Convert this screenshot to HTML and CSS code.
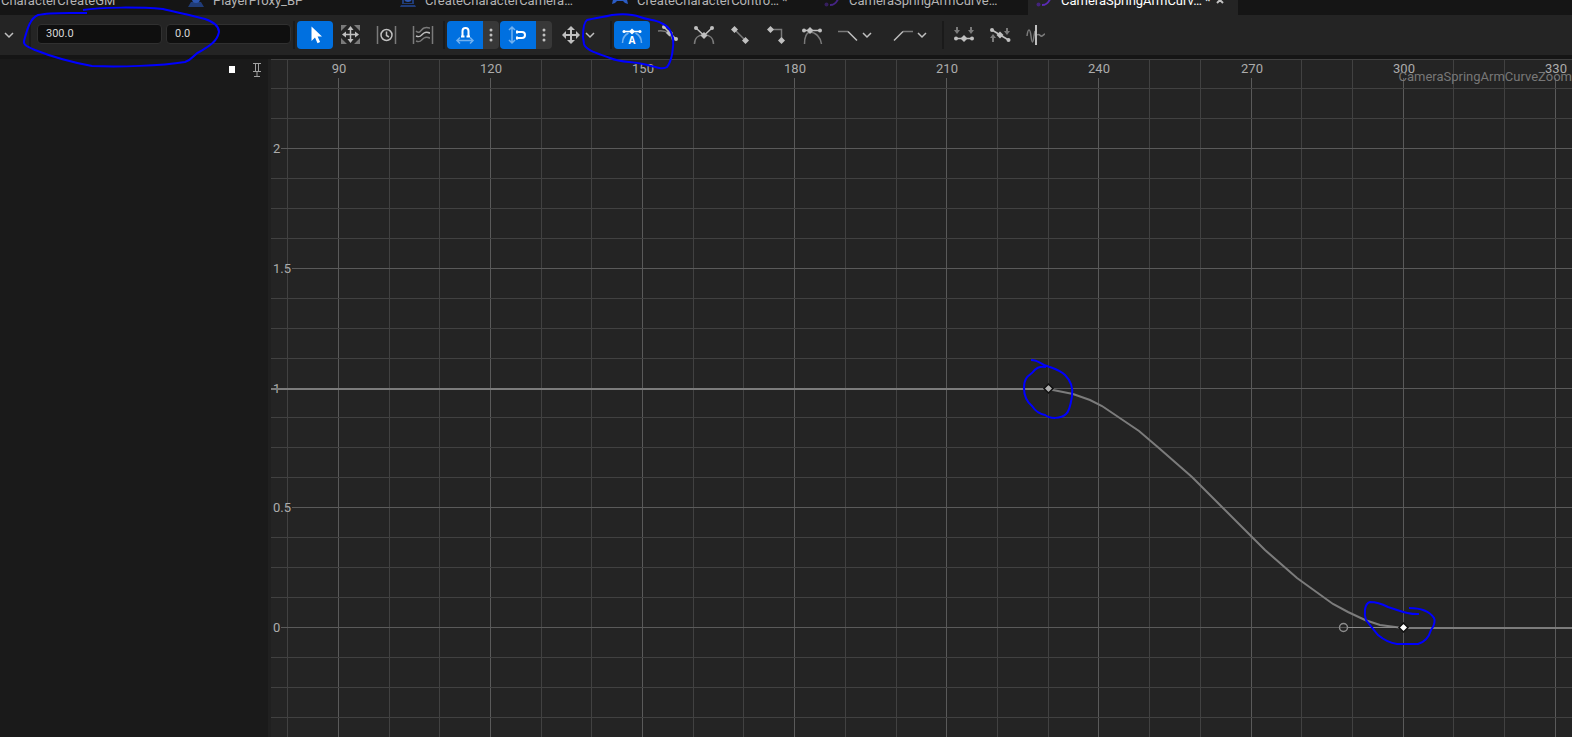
FILE: index.html
```html
<!DOCTYPE html>
<html lang="en">

<head>
  <meta charset="UTF-8">
  <title>Curve editor</title>
  <link rel="stylesheet" href="styles.css">
</head>

<body>
  <nav class="tabs">
    <a class="tab" href="#">
      <svg class="tab-icon person" viewBox="0 0 16 16"><circle cx="8" cy="6" r="4"/><path d="M0 16l3-5h10l3 5z"/></svg>
      <span>CharacterCreateGM</span>
    </a>
    <a class="tab" href="#">
      <svg class="tab-icon person" viewBox="0 0 16 16"><path d="M0 15l3-5h10l3 5z"/><circle class="head" cx="8" cy="7" r="4"/></svg>
      <span>PlayerProxy_BP</span>
    </a>
    <a class="tab" href="#">
      <svg class="tab-icon person" viewBox="0 0 16 16"><path d="M0 15l1-2h14l1 2zM2 12V7h2v4h8V7h2v5z"/><circle class="head" cx="8" cy="6" r="4"/></svg>
      <span>CreateCharacterCamera…</span>
    </a>
    <a class="tab" href="#">
      <svg class="tab-icon pad" viewBox="0 0 16 16"><path d="M2 3h12l2 9-3-1-2-2H5l-2 2-3 1z"/></svg>
      <span>CreateCharacterContro… *</span>
    </a>
    <a class="tab" href="#">
      <svg class="tab-icon curve dim" viewBox="0 0 16 16"><circle cx="2.500" cy="12.500" r="2"/><path d="M6 13c5 0 7-3 9-8"/></svg>
      <span>CameraSpringArmCurve…</span>
    </a>
    <a class="tab active" href="#">
      <svg class="tab-icon curve" viewBox="0 0 16 16"><circle cx="2.500" cy="12.500" r="2"/><path d="M6 13c5 0 7-3 9-8"/></svg>
      <span>CameraSpringArmCurv… *</span>
      <svg class="close" viewBox="0 0 8 8"><path d="M1 1l6 6M7 1L1 7"/></svg>
    </a>
  </nav>

  <header class="toolbar">
    <button class="more" aria-label="More"><svg class="chevron" viewBox="0 0 10 10"><path d="M1 3l4 4 4-4"/></svg></button>
    <div class="fields">
      <input type="text" value="300.0" aria-label="Time">
      <input type="text" value="0.0" aria-label="Value">
    </div>

    <div class="group">
      <button class="tool on" aria-label="Select">
        <svg viewBox="0 0 36 28"><path class="fill" d="M14.500 5.500v14.500l3.500-3.500 2.500 5.700 2.600-1.200-2.500-5.500H25z"/></svg>
      </button>
      <button class="tool" aria-label="Frame">
        <svg viewBox="0 0 36 28">
          <path class="fill grey" d="M8 4h6l-6 6zM27 4v6l-6-6zM8 23v-6l6 6zM27 23h-6l6-6z"/>
          <path d="M17.500 7v13M11 13.500h13"/>
          <path class="fill" d="M17.500 5l3 4h-6zM17.500 22l-3-4h6zM9 13.500l4-3v6zM26 13.500l-4 3v-6z"/>
        </svg>
      </button>
      <button class="tool" aria-label="Frame time">
        <svg viewBox="0 0 36 28">
          <path class="grey" d="M8.500 5v18M26.500 5v18"/>
          <circle cx="17.500" cy="14" r="5.500"/><path d="M17.500 10.500v4l2.500 1.500"/>
        </svg>
      </button>
      <button class="tool" aria-label="Frame values">
        <svg viewBox="0 0 36 28">
          <path class="grey" d="M8.500 5v18M27.500 5v18M11 10c4 4 5-2 8-3s4 0 6 0M11 20c5 2 5-1 8-3s4 0 6 0"/>
          <path d="M11 15c5 2 5-1 8-3s4 0 6 0"/>
        </svg>
      </button>
    </div>

    <div class="group">
      <div class="snap">
        <button class="tool on" aria-label="Time snap">
          <svg viewBox="0 0 36 28">
            <path class="heavy" d="M14 15.500h3.500M19.500 15.500H23M15.500 15.500V10a3 3 0 0 1 6 0v5.500"/>
            <path class="pale" d="M10 19.500h16M13 16.500l-3 3 3 3M23 16.500l3 3-3 3"/>
          </svg>
        </button>
        <button class="dots" aria-label="Time snap options"><svg viewBox="0 0 16 28"><circle cx="8" cy="9" r="1.500"/><circle cx="8" cy="14" r="1.500"/><circle cx="8" cy="19" r="1.500"/></svg></button>
      </div>
      <div class="snap">
        <button class="tool on" aria-label="Value snap">
          <svg viewBox="0 0 36 28">
            <path class="heavy" d="M17 11h5a3 3 0 0 1 0 6h-5M17 9.500v3M17 15.500v3"/>
            <path class="pale" d="M12 6v16M9 9l3-3 3 3M9 19l3 3 3-3"/>
          </svg>
        </button>
        <button class="dots" aria-label="Value snap options"><svg viewBox="0 0 16 28"><circle cx="8" cy="9" r="1.500"/><circle cx="8" cy="14" r="1.500"/><circle cx="8" cy="19" r="1.500"/></svg></button>
      </div>
      <button class="combo" aria-label="Transform">
        <svg class="combo-icon" viewBox="0 0 20 20">
          <path class="thick" d="M10 3v14M3 10h14"/>
          <path class="fill" d="M10 1l4 4H6zM10 19l-4-4h8zM1 10l4-4v8zM19 10l-4 4V6z"/>
        </svg>
        <svg class="chevron" viewBox="0 0 10 10"><path d="M1 3l4 4 4-4"/></svg>
      </button>
    </div>

    <div class="group">
      <button class="tool on" aria-label="Auto tangents">
        <svg viewBox="0 0 36 28">
          <path class="pale" d="M8.500 22c0-5 2-8 6-10M27.500 22c0-5-2-8-6-10"/>
          <path d="M10 10.500h16"/>
          <path class="fill" d="M18 7.500l3 3-3 3-3-3z"/>
          <circle class="fill" cx="10" cy="10.500" r="1.500"/><circle class="fill" cx="26" cy="10.500" r="1.500"/>
          <text x="18" y="23">A</text>
        </svg>
      </button>
      <button class="tool" aria-label="User tangents">
        <svg viewBox="0 0 36 28">
          <path class="grey" d="M8 10c8-1 13 2 15 10"/>
          <path d="M14 6l12 12"/>
          <path class="fill" d="M19.500 8.500L23 12l-3.500 3.500L16 12z"/>
          <circle class="fill" cx="14" cy="6" r="2"/><circle class="fill" cx="26" cy="18" r="2"/>
        </svg>
      </button>
      <button class="tool" aria-label="Broken tangents">
        <svg viewBox="0 0 36 28">
          <path class="grey" d="M8.500 23c0-6 4-9 9-9M27.500 23c0-6-4-9-9-9"/>
          <path d="M10 7l8 7.500L26 7"/>
          <path class="fill" d="M18 11l3.500 3.500L18 18l-3.500-3.500z"/>
          <circle class="fill" cx="10" cy="7" r="2"/><circle class="fill" cx="26" cy="7" r="2"/>
        </svg>
      </button>
      <button class="tool" aria-label="Linear">
        <svg viewBox="0 0 36 28">
          <path class="grey" d="M12.500 8.500l11 11"/>
          <path class="fill" d="M12.500 5l3.500 3.500-3.500 3.500L9 8.500zM23.500 16l3.500 3.500-3.500 3.500-3.500-3.500z"/>
        </svg>
      </button>
      <button class="tool" aria-label="Constant">
        <svg viewBox="0 0 36 28">
          <path class="grey" d="M12.500 8.500h11v11"/>
          <path class="fill" d="M12.500 5l3.500 3.500-3.500 3.500L9 8.500zM23.500 16l3.500 3.500-3.500 3.500-3.500-3.500z"/>
        </svg>
      </button>
      <button class="tool" aria-label="Weighted tangents">
        <svg viewBox="0 0 36 28">
          <path class="grey" d="M10.500 23c0-7 2-11 5-12 6 0 11 5 12 12"/>
          <path d="M10 9.500h16"/>
          <path class="fill" d="M16 6l3.500 3.500L16 13l-3.500-3.500z"/>
          <circle class="fill" cx="10" cy="9.500" r="2"/><circle class="fill" cx="26" cy="9.500" r="2"/>
        </svg>
      </button>
      <button class="combo" aria-label="Pre-infinity">
        <svg class="combo-icon" viewBox="0 0 20 20"><path class="grey" d="M0 6.500h10"/><path d="M10 6.500l9 9"/></svg>
        <svg class="chevron" viewBox="0 0 10 10"><path d="M1 3l4 4 4-4"/></svg>
      </button>
      <button class="combo" aria-label="Post-infinity">
        <svg class="combo-icon" viewBox="0 0 20 20"><path class="grey" d="M10 6.500h10"/><path d="M1 15.500l9-9"/></svg>
        <svg class="chevron" viewBox="0 0 10 10"><path d="M1 3l4 4 4-4"/></svg>
      </button>
    </div>

    <div class="group">
      <button class="tool" aria-label="Flatten">
        <svg viewBox="0 0 36 28">
          <path class="fill grey" d="M10 6h2v3h2l-3 4-3-4h2zM24 6h2v3h2l-3 4-3-4h2z"/>
          <path d="M10 17.500h16"/>
          <path class="fill" d="M18 14l3.500 3.500L18 21l-3.500-3.500z"/>
          <circle class="fill" cx="10" cy="17.500" r="2"/><circle class="fill" cx="26" cy="17.500" r="2"/>
        </svg>
      </button>
      <button class="tool" aria-label="Straighten">
        <svg viewBox="0 0 36 28">
          <path class="fill grey" d="M24 7h2v3h2l-3 4-3-4h2zM10 21h2v-4h2l-3-4-3 4h2z"/>
          <path d="M10 9l16.500 10"/>
          <path class="fill" d="M18 10.500l3.500 3.500-3.500 3.500-3.500-3.500z"/>
          <circle class="fill" cx="10" cy="9" r="2"/><circle class="fill" cx="26.500" cy="19" r="2"/>
        </svg>
      </button>
      <button class="tool" aria-label="Curve filter">
        <svg viewBox="0 0 36 28">
          <path class="grey" d="M9 15c1-8 3-8 4 0s2 8 3 0l1-5"/>
          <path class="grey" d="M19 14c3-2 3 2 5 1s2-2 3-2"/>
          <path class="thick" d="M18 4v20"/>
        </svg>
      </button>
    </div>
  </header>

  <main class="editor">
    <aside class="outliner">
      <span class="swatch"></span>
      <button class="pin" aria-label="Pin curve">
        <svg viewBox="0 0 8 14"><path d="M0 .500h8M2.500 1v7M5.500 1v7M0 8.500h8M4 9v4M1 13.500h6"/></svg>
      </button>
    </aside>

    <section class="graph">
      <svg class="plot">
        <g id="grid"></g>
        <g id="labels"></g>
        <polyline class="line" points="0,330 777,330 802,335 819,341 831,347 868,372 889,390 921,418 951,448 981,478 994,491 1026,519 1062,545 1077,553 1094,561 1109,566 1132,569 4000,569"/>
        <path class="handle" d="M1077 568.500h55"/>
        <circle class="handle" cx="1072.500" cy="568.500" r="4"/>
        <path class="key" d="M777.500 325l4.500 4.500-4.500 4.500-4.500-4.500z"/>
        <path class="key picked" d="M1132.500 564l4.500 4.500-4.500 4.500-4.500-4.500z"/>
      </svg>
      <span class="curve-name">CameraSpringArmCurveZoom</span>
    </section>
  </main>

  <!-- pen marks drawn over the editor -->
  <svg class="marks">
    <path d="M83 10C100 7 140 7 163 9C175 12 190 15 205 19C214 22 219 27 219 32C217 42 208 47 201 51C193 54 194 59 185 62C160 66 120 67 92 66C70 62 50 56 35 50C28 47 23 45 24 41C27 30 30 18 38 15C50 12 70 13 87 13"/>
    <path d="M583 37C583 30 584 22 587 20C595 18 604 17 612 15C620 14 632 14 640 17C648 20 657 20 661 23C669 26 671 31 673 38C674 46 672 61 667 67C663 70 656 67 643 64C630 61 622 63 610 58C600 54 586 51 584 44z"/>
    <path d="M1031 360C1038 360 1041 364 1047 366C1055 369 1060 370 1065 375C1072 382 1073 390 1072 396C1071 402 1070 411 1066 414C1061 419 1050 419 1045 415C1039 414 1034 409 1032 406C1026 401 1024 396 1024 388C1024 378 1028 376 1032 373C1036 368 1039 366 1046 367"/>
    <path d="M1419 614C1407 615 1396 609 1388 607C1382 604 1374 602 1370 602C1364 604 1364 614 1366 620C1370 625 1374 630 1378 635C1384 640 1390 643 1397 644H1418C1425 642 1429 637 1431 630C1435 625 1435 620 1434 618C1430 612 1421 608 1409 608"/>
  </svg>

  <script>
    const ns = "http://www.w3.org/2000/svg";
    const graph = document.querySelector(".graph");
    const grid = document.querySelector("#grid");
    const labels = document.querySelector("#labels");

    // pixels between grid lines, and where 90 and 0 sit in the graph
    const stepX = 50.71;
    const stepY = 29.93;
    const startX = 66.8;
    const zeroY = 568;

    function addLine(x, y, w, h, major) {
      const line = document.createElementNS(ns, "rect");
      line.setAttribute("x", x);
      line.setAttribute("y", y);
      line.setAttribute("width", w);
      line.setAttribute("height", h);
      line.setAttribute("class", major ? "major" : "minor");
      grid.appendChild(line);
    }

    function addLabel(text, x, y, anchor) {
      const label = document.createElementNS(ns, "text");
      label.setAttribute("x", x);
      label.setAttribute("y", y);
      label.setAttribute("text-anchor", anchor);
      label.textContent = text;
      labels.appendChild(label);
      return label.getBBox().width;
    }

    function drawGrid() {
      const width = graph.clientWidth;
      const height = graph.clientHeight;
      grid.innerHTML = "";
      labels.innerHTML = "";

      for (let k = -1; startX + k * stepX < width; k++) {
        const x = Math.round(startX + k * stepX);
        const major = k % 3 == 0;
        addLine(x, major ? 19 : 0, 1, height, major);
        if (major) {
          addLabel(90 + k * 10, x + 1, 14, "middle");
        }
      }

      for (let k = 19; zeroY - k * stepY < height; k--) {
        const y = Math.max(0, Math.round(zeroY - k * stepY));
        const major = k % 4 == 0;
        let left = 0;
        if (major && k >= 0) {
          left = Math.round(addLabel(k / 8, 2, y + 5, "start")) + 3;
        }
        addLine(left, y, width, 1, major);
      }
    }

    drawGrid();
    window.addEventListener("resize", drawGrid);
  </script>
</body>

</html>
```
FILE: styles.css
```css
* {
  box-sizing: border-box;
}

body {
  margin: 0;
  height: 100vh;
  display: flex;
  flex-direction: column;
  position: relative;
  overflow: hidden;
  background: #151515;
  color: #c0c0c0;
  font-family: Roboto, sans-serif;
  font-size: 13px;
}

button {
  border: 0;
  padding: 0;
  background: none;
  color: inherit;
  font: inherit;
}

svg {
  display: block;
  fill: none;
  stroke: #c0c0c0;
}

/* tabs */

.tabs {
  display: flex;
  align-items: flex-end;
  gap: 2px;
  flex: none;
  height: 15px;
  margin-left: -32px;
  overflow: hidden;
}

.tab {
  display: flex;
  align-items: center;
  flex: none;
  width: 210px;
  height: 30px;
  padding: 0 8px;
  color: #b4b4b4;
  text-decoration: none;
  white-space: nowrap;
}

.tab.active {
  background: #242424;
  color: #fff;
}

.tab-icon {
  width: 16px;
  height: 16px;
  margin-right: 9px;
}

.person {
  fill: #203c78;
  stroke: none;
}

.person .head {
  fill: #2c55ae;
}

.pad {
  fill: #2b5cc4;
  stroke: none;
}

.curve {
  stroke: #5a2bb4;
  stroke-width: 2;
}

.curve circle {
  fill: #43237c;
  stroke: none;
}

.dim {
  opacity: .7;
}

.close {
  width: 8px;
  height: 8px;
  margin-left: auto;
  margin-right: 6px;
  stroke-width: 2;
}

/* toolbar */

.toolbar {
  display: flex;
  align-items: center;
  flex: none;
  height: 40px;
  padding-left: 1px;
  background: #242424;
}

.more {
  width: 16px;
  height: 28px;
  margin-right: 12px;
  display: flex;
  align-items: center;
  justify-content: center;
}

.fields {
  display: flex;
  align-items: center;
  gap: 4px;
  height: 28px;
  padding: 0 0 2px 6px;
  border-left: 2px solid #1a1a1a;
}

.fields input {
  width: 125px;
  height: 20px;
  padding: 0 8px 1px;
  background: #0f0f0f;
  border: 1px solid #303030;
  border-radius: 4px;
  color: #d8d8d8;
  font-family: Roboto, sans-serif;
  font-size: 11px;
}

.group {
  display: flex;
  height: 28px;
  margin-left: 2px;
  padding-left: 2px;
  border-left: 2px solid #1a1a1a;
}

.tool {
  width: 36px;
  height: 28px;
  border-radius: 4px;
}

.tool svg {
  width: 36px;
  height: 28px;
  stroke-width: 1.5;
}

.tool.on {
  background: #0070e0;
}

.tool.on svg {
  stroke: #fff;
}

svg .grey {
  stroke: #7a7a7a;
}

svg .fill {
  fill: #c0c0c0;
  stroke: none;
}

svg .fill.grey {
  fill: #7a7a7a;
}

.tool.on .fill {
  fill: #fff;
}

svg .pale {
  stroke: #6fb0f0;
}

svg .thick,
svg .heavy {
  stroke-width: 2;
}

.tool text {
  fill: #fff;
  stroke: none;
  font-family: "Open Sans", sans-serif;
  font-size: 10px;
  font-weight: 700;
  text-anchor: middle;
}

.snap {
  display: flex;
  margin-right: 1px;
}

.snap .tool {
  border-radius: 4px 0 0 4px;
}

.dots {
  width: 16px;
  height: 28px;
  background: #383838;
  border-radius: 0 4px 4px 0;
}

.dots svg {
  width: 16px;
  height: 28px;
  fill: #c0c0c0;
  stroke: none;
}

.combo {
  display: flex;
  align-items: center;
  gap: 4px;
  width: 55px;
  height: 28px;
  padding-left: 8px;
}

.combo-icon {
  width: 20px;
  height: 20px;
  stroke-width: 1.5;
}

.chevron {
  width: 10px;
  height: 10px;
  stroke-width: 1.5;
}

/* editor */

.editor {
  display: flex;
  flex: 1;
  min-height: 0;
  margin-top: 4px;
}

.outliner {
  display: flex;
  align-items: flex-start;
  justify-content: flex-end;
  flex: none;
  gap: 18px;
  width: 271px;
  height: 100%;
  padding: 4px 7px 0 0;
  background: #1a1a1a;
  border-right: 3px solid #202020;
}

.swatch {
  width: 6px;
  height: 7px;
  margin-top: 3px;
  background: #fff;
}

.pin svg {
  width: 8px;
  height: 14px;
  stroke: #a0a0a0;
}

.graph {
  flex: 1;
  min-width: 0;
  position: relative;
  overflow: hidden;
  background: #242424;
}

.plot {
  width: 100%;
  height: 100%;
}

.plot rect {
  stroke: none;
}

.minor {
  fill: #414141;
}

.major {
  fill: #5a5a5a;
}

.plot text {
  fill: #acacac;
  stroke: none;
  font-size: 13px;
}

.line {
  stroke: #7c7c7c;
  stroke-width: 2;
}

.handle {
  stroke: #8c8c8c;
}

circle.handle {
  stroke-width: 1.5;
}

.key {
  fill: #b0b0b0;
  stroke: #101010;
  stroke-width: 1.5;
}

.key.picked {
  fill: #fff;
}

.curve-name {
  position: absolute;
  top: 10px;
  right: 0;
  color: #777;
  font-size: 13px;
  line-height: 16px;
}

.marks {
  position: absolute;
  top: 0;
  left: 0;
  width: 100%;
  height: 100%;
  stroke: #0000ff;
  stroke-width: 2;
  pointer-events: none;
}
```
